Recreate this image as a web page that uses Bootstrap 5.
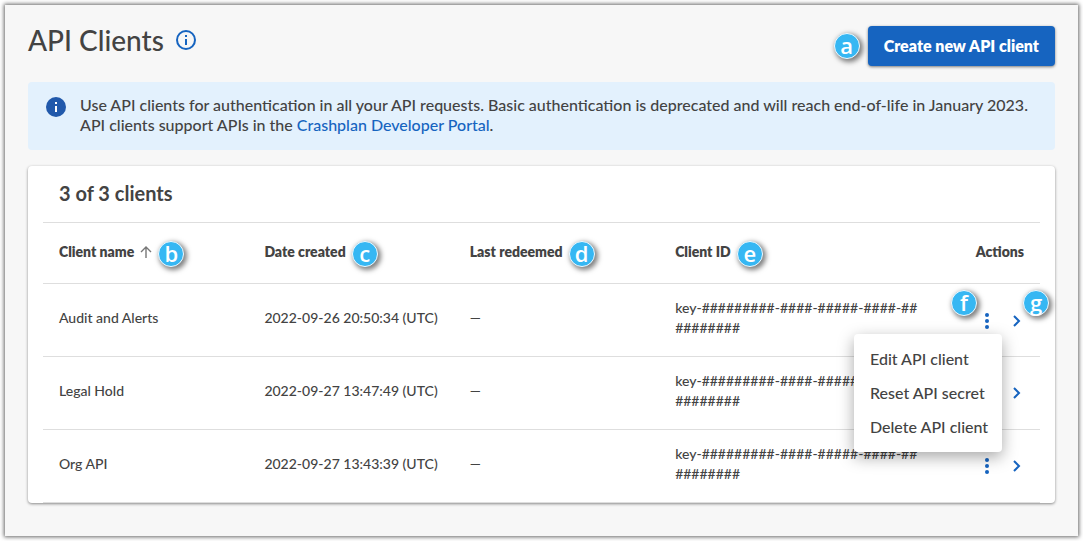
<!DOCTYPE html>
<html lang="en">
<head>
<meta charset="utf-8">
<meta name="viewport" content="width=device-width, initial-scale=1">
<title>API Clients</title>
<link href="https://cdn.jsdelivr.net/npm/bootstrap@5.3.0/dist/css/bootstrap.min.css" rel="stylesheet">
<style>
  body { background: #fff; color: #434343; font: 500 16px/20px Lato, "Open Sans", sans-serif; }
  a { color: #1664c0; }
  .page-frame { margin: 5px; padding: 21px 23px 33px; background: #f7f7f7; box-shadow: 0 0 4px 1px rgba(0,0,0,.6); }
  .page-title { font-size: 28px; line-height: 28px; font-weight: 500; }
  .title-group { gap: 12px; }
  .icon-button { color: #1664c0; line-height: 0; }
  .create-button { --bs-btn-color: #fff; --bs-btn-bg: #1664c0; --bs-btn-hover-color: #fff; --bs-btn-hover-bg: #12539f;
    height: 40px; border: 0; border-radius: 4px; font-size: 16px; line-height: 20px; font-weight: 800; box-shadow: 0 1px 3px rgba(0,0,0,.5); }
  .notice { background: #e3f1fd; border: 0; border-radius: 4px; color: #434343; padding: 13px 18px 15px; margin-top: 16px; min-height: 68px; gap: 14px; }
  .clients-card { border: 0; border-radius: 4px; padding: 0 15px; margin-top: 16px; box-shadow: 0 1px 3px rgba(0,0,0,.45); }
  .clients-title { font-size: 20px; line-height: 24px; font-weight: 700; padding: 15px 16px 17px; }
  .clients-table { table-layout: fixed; font-size: 14px; line-height: 20px; --bs-table-color: #434343; --bs-table-bg: transparent; color: #434343; border-color: #dedede; }
  .clients-table th, .clients-table td { height: 73px; padding: 0 0 4px 16px; vertical-align: middle; }
  .clients-table th { height: 61px; border-top: 1px solid #dedede; font-weight: 800; padding-bottom: 2px; }
  .clients-table th:last-child { width: 90px; padding: 0 16px 2px 0; text-align: right; }
  .clients-table td:last-child { padding: 0 16px 0 0; }
  .data-col { width: 20.6%; }
  .head-label { gap: 6px; }
  .marker { display: inline-flex; align-items: center; justify-content: center; flex: none; width: 26px; height: 26px; padding-bottom: 3px;
    border: 1px solid #f0faff; border-radius: 50%; background: #36b7f3; color: #fff; font: 600 22px/20px "Open Sans", sans-serif; box-shadow: 2px 2px 5px 1px rgba(0,0,0,.5); }
  .head-label .marker { margin-top: 4px; }
  .marker-menu { position: absolute; left: -29px; top: -20px; }
  .marker-open { position: absolute; left: 13px; top: -20px; }
  .row-menu { width: 148px; min-width: 0; margin: 0; padding: 8px 0; border: 0; border-radius: 4px; top: 24px; right: -8px; z-index: 5; box-shadow: 0 5px 16px rgba(0,0,0,.35); }
  .row-menu .dropdown-item { color: #434343; font-weight: 500; line-height: 20px; padding: 7px 16px; white-space: nowrap; }
</style>
</head>
<body>
<main class="page-frame">
  <header class="d-flex align-items-center justify-content-between">
    <div class="title-group d-flex align-items-center mb-2 pb-1">
      <h1 class="page-title mb-0">API Clients</h1>
      <button class="icon-button btn p-0 border-0" aria-label="About API clients">
        <svg width="20" height="20" viewBox="0 0 20 20" fill="none" stroke="currentColor" stroke-width="2"><circle cx="10" cy="10" r="9"/><path d="M10 9v6M10 5v2"/></svg>
      </button>
    </div>
    <div class="d-flex align-items-center gap-2">
      <span class="marker">a</span>
      <button class="btn create-button px-3 py-0">Create new API client</button>
    </div>
  </header>

  <div class="notice alert d-flex align-items-start mb-0" role="note">
    <svg class="flex-shrink-0" width="20" height="22" viewBox="0 -2 20 22"><circle cx="10" cy="10" r="10" fill="#2159ab"/><path d="M10 9v6M10 5v2" stroke="#fff" stroke-width="2"/></svg>
    <div>Use API clients for authentication in all your API requests. Basic authentication is deprecated and will reach end-of-life in January 2023.<br>API clients support APIs in the <a href="#" class="text-decoration-none">Crashplan Developer Portal</a>.</div>
  </div>

  <section class="card clients-card">
    <h2 class="clients-title mb-0">3 of 3 clients</h2>
    <table class="table clients-table mb-0">
      <thead>
        <tr>
          <th class="data-col"><div class="head-label d-flex align-items-center"><span>Client name</span>
            <svg width="12" height="12" viewBox="0 0 12 12" fill="none" stroke="#777" stroke-width="1.4"><path d="M6 12V1M1 6l5-5 5 5"/></svg>
            <span class="marker">b</span></div></th>
          <th class="data-col"><div class="head-label d-flex align-items-center"><span>Date created</span><span class="marker">c</span></div></th>
          <th class="data-col"><div class="head-label d-flex align-items-center"><span>Last redeemed</span><span class="marker">d</span></div></th>
          <th><div class="head-label d-flex align-items-center"><span>Client ID</span><span class="marker">e</span></div></th>
          <th>Actions</th>
        </tr>
      </thead>
      <tbody>
        <tr>
          <td>Audit and Alerts</td><td>2022-09-26 20:50:34 (UTC)</td><td>—</td>
          <td>key-#########-####-#####-####-##<br>########</td>
          <td><div class="d-flex justify-content-end gap-3">
            <div class="position-relative">
              <button class="btn icon-button p-0 border-0" aria-label="Actions for Audit and Alerts" aria-expanded="true"><svg width="14" height="16" viewBox="0 0 14 16" fill="currentColor"><circle cx="7" cy="2" r="2"/><circle cx="7" cy="8" r="2"/><circle cx="7" cy="14" r="2"/></svg></button>
              <span class="marker marker-menu">f</span>
              <div class="dropdown-menu row-menu show">
                <button class="dropdown-item">Edit API client</button>
                <button class="dropdown-item">Reset API secret</button>
                <button class="dropdown-item">Delete API client</button>
              </div>
            </div>
            <div class="position-relative">
              <button class="btn icon-button p-0 border-0" aria-label="Open Audit and Alerts"><svg width="14" height="16" viewBox="0 0 14 16" fill="none" stroke="currentColor" stroke-width="2"><path d="M4 3l5 5-5 5"/></svg></button>
              <span class="marker marker-open">g</span>
            </div>
          </div></td>
        </tr>
        <tr>
          <td>Legal Hold</td><td>2022-09-27 13:47:49 (UTC)</td><td>—</td>
          <td>key-#########-####-#####-####-##<br>########</td>
          <td><div class="d-flex justify-content-end gap-3">
            <button class="btn icon-button p-0 border-0" aria-label="Actions for Legal Hold"><svg width="14" height="16" viewBox="0 0 14 16" fill="currentColor"><circle cx="7" cy="2" r="2"/><circle cx="7" cy="8" r="2"/><circle cx="7" cy="14" r="2"/></svg></button>
            <button class="btn icon-button p-0 border-0" aria-label="Open Legal Hold"><svg width="14" height="16" viewBox="0 0 14 16" fill="none" stroke="currentColor" stroke-width="2"><path d="M4 3l5 5-5 5"/></svg></button>
          </div></td>
        </tr>
        <tr>
          <td>Org API</td><td>2022-09-27 13:43:39 (UTC)</td><td>—</td>
          <td>key-#########-####-#####-####-##<br>########</td>
          <td><div class="d-flex justify-content-end gap-3">
            <button class="btn icon-button p-0 border-0" aria-label="Actions for Org API"><svg width="14" height="16" viewBox="0 0 14 16" fill="currentColor"><circle cx="7" cy="2" r="2"/><circle cx="7" cy="8" r="2"/><circle cx="7" cy="14" r="2"/></svg></button>
            <button class="btn icon-button p-0 border-0" aria-label="Open Org API"><svg width="14" height="16" viewBox="0 0 14 16" fill="none" stroke="currentColor" stroke-width="2"><path d="M4 3l5 5-5 5"/></svg></button>
          </div></td>
        </tr>
      </tbody>
    </table>
  </section>
</main>
<script src="https://cdn.jsdelivr.net/npm/bootstrap@5.3.0/dist/js/bootstrap.bundle.min.js"></script>
</body>
</html>
